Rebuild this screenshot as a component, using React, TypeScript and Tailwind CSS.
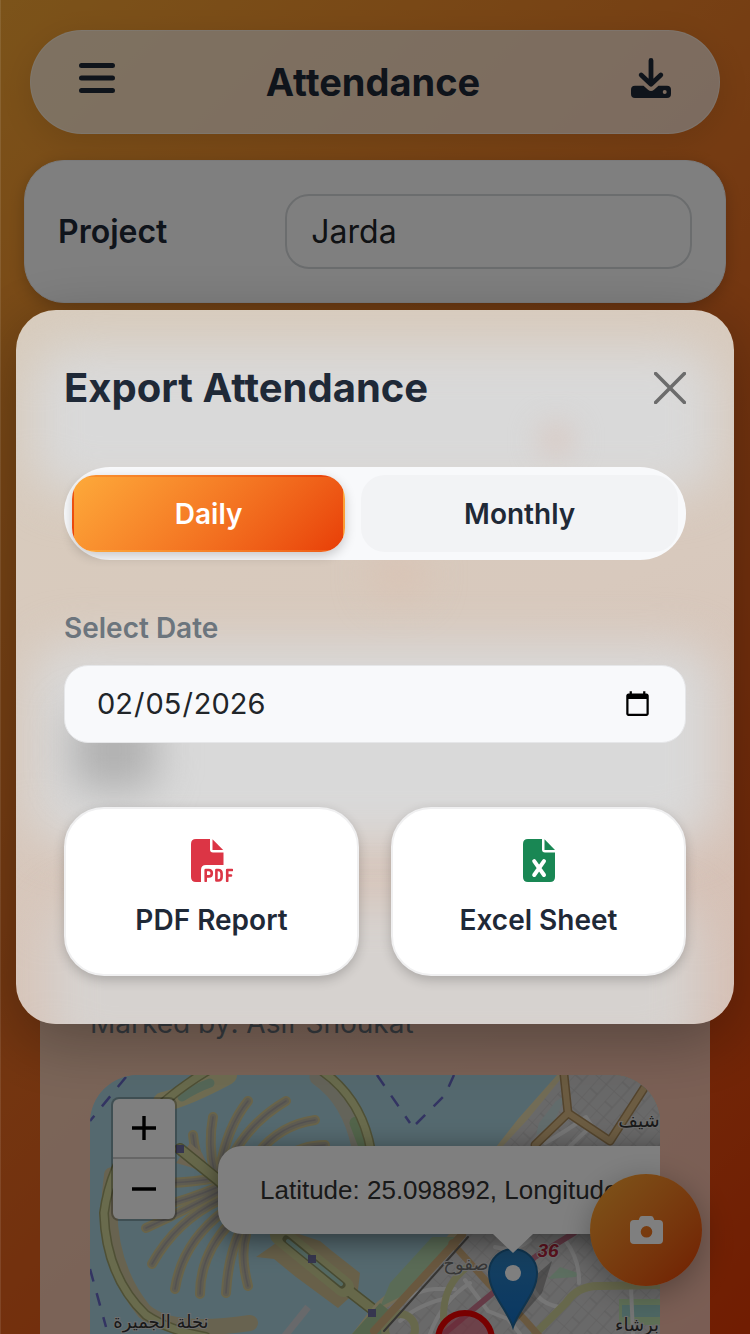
import { useState } from 'react';

const MODES = ['Daily', 'Monthly'];

// Palm fronds, tip first, each one ending at the trunk
const FRONDS = [
  'M158 26 Q137 52 130 94',
  'M196 26 Q162 46 144 78',
  'M225 45 Q190 50 168 78',
  'M235 70 Q212 70 192 84',
  'M123 42 Q118 68 124 96',
  'M103 60 Q105 80 112 92',
  'M78 108 Q105 107 126 103',
  'M62 134 Q100 124 128 112',
  'M56 153 Q98 134 128 117',
  'M62 189 Q86 146 130 125',
  'M85 214 Q92 168 134 136',
  'M110 219 Q110 180 140 148',
  'M136 218 Q138 182 150 156',
  'M158 211 Q150 180 156 160',
];

const MINOR_ROADS = [
  'M455 68 Q470 60 496 42 L504 54',
  'M497 55 L480 71',
  'M300 240 Q318 216 345 214 L365 214 M310 246 Q330 228 362 222',
  'M440 165 Q425 178 405 172',
  'M475 165 Q490 185 489 208',
  'M541 212 L543 259',
  'M375 205 L398 236 L418 244 L430 259',
  'M340 259 Q352 226 380 208',
  'M440 200 Q442 228 470 232',
];

function TrayDownIcon() {
  return (
    <svg viewBox="0 0 40 40" className="size-10" aria-hidden="true">
      <path
        d="M20 2.5V25.5 M10.2 17 20 26.2 29.8 17"
        fill="none"
        stroke="currentColor"
        strokeWidth="4.8"
        strokeLinecap="round"
        strokeLinejoin="round"
      />
      <path
        fill="currentColor"
        fillRule="evenodd"
        d="M4 27.8H12.5L17 31.8Q20 34.2 23 31.8L27.5 27.8H36Q40 27.8 40 31.8V36Q40 40 36 40H4Q0 40 0 36V31.8Q0 27.8 4 27.8ZM33.7 32A2 2 0 1 0 33.7 36A2 2 0 1 0 33.7 32Z"
      />
    </svg>
  );
}

function PdfIcon() {
  return (
    <svg viewBox="0 0 42 43" className="h-[43px] w-[42px] text-[#dc3545]" aria-hidden="true">
      <path fill="currentColor" d="M5 0H19V10.5Q19 13.5 22 13.5H32.5V26H15Q10 26 10 31V43H5Q0 43 0 38V5Q0 0 5 0Z" />
      <path fill="currentColor" d="M21.5.3 32.2 11H21.5Z" />
      <path
        d="M14.7 42V31H17.8Q20.8 31 20.8 34.2Q20.8 37.4 17.8 37.4H14.7 M25.4 31V41.5H27.2Q30.6 41.5 30.6 38V34.5Q30.6 31 27.2 31ZM36.2 42V31H41 M36.2 36.5H40"
        fill="none"
        stroke="currentColor"
        strokeWidth="2.6"
        strokeLinecap="round"
        strokeLinejoin="round"
      />
    </svg>
  );
}

function ExcelIcon() {
  return (
    <svg viewBox="0 0 32 43" className="h-[43px] w-8 text-[#198754]" aria-hidden="true">
      <path fill="currentColor" d="M5 0H19V10.5Q19 13.5 22 13.5H32V38Q32 43 27 43H5Q0 43 0 38V5Q0 0 5 0Z" />
      <path fill="currentColor" d="M21.5.3 32 11H21.5Z" />
      <path d="M11.2 22.2 21 36 M21 22.2 11.2 36" stroke="#fff" strokeWidth="4" strokeLinecap="round" />
    </svg>
  );
}

function MapCanvas() {
  return (
    <svg viewBox="0 0 571 259" preserveAspectRatio="xMinYMin slice" className="h-full w-full" aria-hidden="true">
      <defs>
        <pattern id="blocks" width="26" height="20" patternUnits="userSpaceOnUse" patternTransform="rotate(-48)">
          <rect width="26" height="20" fill="#d3d2d2" />
          <path d="M0 0H26 M0 10H26 M0 0V20 M13 0V10" stroke="#bfbebe" strokeWidth="1.2" />
        </pattern>
        <linearGradient id="pin" x1="0" y1="0" x2="0" y2="1">
          <stop offset="0" stopColor="#2e82c0" />
          <stop offset="1" stopColor="#126fc6" />
        </linearGradient>
      </defs>
      <rect width="571" height="259" fill="#aad3df" />

      {/* crescent */}
      <g fill="none" strokeLinecap="round">
        <path d="M73 27Q96 22 137 0" stroke="#dfd9a5" strokeWidth="20" />
        <path d="M92 22Q106 13 120 8" stroke="#abcfb0" strokeWidth="9" />
        <path d="M228 2Q260 24 270 72" stroke="#c9c8b4" strokeWidth="17" />
        <path d="M266 48L276 74" stroke="#a5c995" strokeWidth="13" />
        <path d="M22 100Q10 182 54 236Q80 260 160 248" stroke="#d0c7a0" strokeWidth="16" />
        <path d="M117 -4Q74 22 50 52Q20 92 14 138Q16 202 56 240Q80 256 116 262" stroke="#9ea06b" strokeWidth="10" />
        <path d="M117 -4Q74 22 50 52Q20 92 14 138Q16 202 56 240Q80 256 116 262" stroke="#d2d69a" strokeWidth="7" />
        <path d="M232 -4Q272 24 281 76" stroke="#9ea06b" strokeWidth="10" />
        <path d="M232 -4Q272 24 281 76" stroke="#d2d69a" strokeWidth="7" />
      </g>

      {/* palm */}
      <g fill="none" strokeLinecap="round">
        {FRONDS.map(d => (
          <path key={d} d={d} stroke="#d3c894" strokeWidth="10" />
        ))}
        {FRONDS.map(d => (
          <path key={d} d={d} stroke="#bdb8a4" strokeWidth="6" />
        ))}
        {FRONDS.map(d => (
          <path key={d} d={d} stroke="#a8a4a2" strokeWidth="1.6" />
        ))}
      </g>
      <path d="M100 68L112 78L122 100L100 92L86 88Z" fill="#d8c9a4" />
      <path d="M166 182L186 168L176 154L206 158L230 166L242 176L270 198L268 215L248 233L206 202L184 184Z" fill="#d0c193" />
      <g fill="none" strokeLinecap="round">
        <path d="M90 74L127 104L190 160L254 212L290 240" stroke="#959864" strokeWidth="12" />
        <path d="M90 74L127 104L190 160L254 212L290 240" stroke="#cdd095" strokeWidth="9" />
        <path d="M190 160L254 212" stroke="#cdd095" strokeWidth="20" />
        <path d="M196 164L252 210" stroke="#8f9565" strokeWidth="7" />
        <path d="M198 166L251 209" stroke="#a8d2c5" strokeWidth="4" />
      </g>

      {/* mainland */}
      <path d="M467 0L428 44L406 72L372 140L354 166L330 180L300 216L286 228L262 259H571V0Z" fill="#e5d9ac" />
      <path d="M474 0L438 44L412 72L380 150L340 184L312 222L292 236L268 259H571V0Z" fill="url(#blocks)" />
      <path d="M466 26L449 48L446 60L462 52L476 20Z" fill="#c4d8d8" />
      <path d="M342 162L370 162L318 218L290 232L300 208Z" fill="#b5d7ad" />
      <path d="M262 259L290 228L300 236L296 259Z" fill="#a9c998" />
      <path d="M398 196L408 190L410 200Z M458 204L470 192L488 198L486 202Z" fill="#b9dcc0" />
      <path d="M529 224H571V250H529Z" fill="#bedfad" />
      <path d="M532 230H571V242H532Z" fill="#9ccfc8" />
      <g fill="none" strokeLinecap="round" strokeLinejoin="round">
        {MINOR_ROADS.map(d => (
          <path key={d} d={d} stroke="#ececec" strokeWidth="4" />
        ))}
        <path d="M571 210L510 211Q488 210 476 228L445 259" stroke="#cfd199" strokeWidth="8" />
        <path d="M380 190Q350 210 354 250" stroke="#cfd199" strokeWidth="7" />
        <circle cx="310" cy="254" r="15" stroke="#cfd199" strokeWidth="8" />
        <path d="M445 70L478 38L474 0" stroke="#a8895a" strokeWidth="9" />
        <path d="M478 38L520 66L560 4" stroke="#a8895a" strokeWidth="9" />
        <path d="M445 70L478 38L474 0" stroke="#d8b985" strokeWidth="6" />
        <path d="M478 38L520 66L560 4" stroke="#d8b985" strokeWidth="6" />
        <path d="M362 168L398 208L435 245L450 262" stroke="#d3b07f" strokeWidth="7" />
        <path d="M372 160L284 256" stroke="#d3b07f" strokeWidth="8" />
        <path d="M378 162L294 256" stroke="#6c6a66" strokeWidth="2" />
        <path d="M484 158L445 182L398 222L350 262" stroke="#c9748c" strokeWidth="6" strokeDasharray="44 3" />
      </g>
      <path d="M194 262L218 232" stroke="#d0d3d6" strokeWidth="7" />

      {/* ferry lines */}
      <g fill="none" stroke="#6668c4" strokeWidth="2.5" strokeDasharray="13 12">
        <path d="M36 2L0 46" />
        <path d="M0 194L16 252" />
        <path d="M287 0L320 48" />
        <path d="M364 0L355 20L326 49" />
      </g>
      <path d="M86 70h8v8h-8z M218 180h8v8h-8z M278 234h8v8h-8z" fill="#6d6d9e" />

      <g fontFamily="'DejaVu Sans', sans-serif" fontSize="18" fill="#333" stroke="#dcdcdc" strokeWidth="2" paintOrder="stroke">
        <text x="71" y="253" textAnchor="middle">نخلة الجميرة</text>
        <text x="549" y="52" textAnchor="middle" fontSize="19">شيف</text>
        <text x="376" y="195" textAnchor="middle" fill="#6e6e6e">صفوح</text>
        <text x="547" y="256" textAnchor="middle">برشاء</text>
        <text x="458" y="182" textAnchor="middle" fontFamily="'Liberation Sans', sans-serif" fontSize="19" fontWeight="700" fontStyle="italic" fill="#b8263c">
          36
        </text>
      </g>

      <circle cx="375" cy="265" r="27" fill="#e0526c" fillOpacity=".6" stroke="#f00000" strokeWidth="6" />
      <path d="M424 250L446 200L462 186L452 218Z" fill="#000" opacity=".25" />
      <path
        fill="url(#pin)"
        stroke="#20689c"
        strokeWidth="2"
        d="M423 252C417 234 399 218 399 198A24 24 0 0 1 447 198C447 218 429 234 423 252Z"
      />
      <circle cx="423" cy="198" r="8" fill="#fff" />
    </svg>
  );
}

function AttendanceScreen() {
  return (
    <div className="flex h-screen flex-col overflow-hidden bg-linear-135 from-[#f8a734] via-[#e86d22] to-[#e23a04]">
      <header className="mx-[30px] mt-[30px] flex h-[104px] shrink-0 items-center justify-between rounded-[52px] border border-white/40 bg-white/70 px-12 pb-2 text-[#1f2937] shadow-[0_8px_32px_rgba(0,0,0,0.1)]">
        <button type="button" aria-label="Menu">
          <svg viewBox="0 0 36 30" className="h-[30px] w-9" aria-hidden="true">
            <path d="M2.5 2.5H33.5M2.5 15H33.5M2.5 27.5H33.5" stroke="currentColor" strokeWidth="5" strokeLinecap="round" />
          </svg>
        </button>
        <h1 className="pt-2 text-[38px] leading-12 font-bold">Attendance</h1>
        <button type="button" aria-label="Download">
          <TrayDownIcon />
        </button>
      </header>

      <section className="mx-6 mt-[26px] flex shrink-0 items-center gap-4 rounded-[40px] border border-[#f4f4f6] bg-white p-[33px] shadow-[0_4px_16px_rgba(0,0,0,0.2)]">
        <label htmlFor="project" className="w-1/3 text-[32px] leading-10 font-semibold text-[#1f2937]">
          Project
        </label>
        <select
          id="project"
          className="h-[75px] min-w-0 flex-1 appearance-none rounded-3xl border-2 border-[#d7dadd] bg-transparent px-6 text-[32px] text-[#212529]"
        >
          <option>Jarda</option>
        </select>
      </section>

      <section className="mx-10 mt-[586px] flex min-h-0 flex-1 flex-col bg-white/65 px-[50px] pt-[114px]">
        <p className="text-[28px] leading-10 text-[#6c757d]">Marked by: Asif Shoukat</p>
        <div className="relative mt-8 min-h-0 flex-1 overflow-hidden rounded-t-[48px] bg-[#aad3df]">
          <MapCanvas />
          <div className="absolute top-[22px] left-[21px] flex w-[66px] flex-col rounded-lg border-2 border-black/25 bg-white bg-clip-padding text-black">
            <button type="button" aria-label="Zoom in" className="flex h-15 items-center justify-center border-b-2 border-[#ccc]">
              <svg viewBox="0 0 24 24" className="size-6" aria-hidden="true">
                <path d="M0 12H24M12 0V24" stroke="currentColor" strokeWidth="3.4" />
              </svg>
            </button>
            <button type="button" aria-label="Zoom out" className="flex h-15 items-center justify-center">
              <svg viewBox="0 0 24 24" className="size-6" aria-hidden="true">
                <path d="M0 12H24" stroke="currentColor" strokeWidth="3.4" />
              </svg>
            </button>
          </div>
          <div className="absolute top-[71px] left-32 rounded-3xl bg-white px-[42px] py-6 font-['Liberation_Sans',Arial,sans-serif] text-[26px] leading-10 whitespace-nowrap text-[#333] shadow-[0_6px_28px_rgba(0,0,0,0.5)]">
            Latitude: 25.098892, Longitude: 55.152704
            <svg viewBox="0 0 40 20" className="absolute top-full left-[275px] h-5 w-10" aria-hidden="true">
              <path d="M0 0H40L20 19Z" fill="#fff" />
            </svg>
          </div>
        </div>
      </section>

      <button
        type="button"
        aria-label="Take photo"
        className="fixed right-12 bottom-12 flex size-28 items-center justify-center rounded-full bg-linear-135 from-[#fbab35] to-[#e23a00] text-white shadow-[0_8px_32px_rgba(0,0,0,0.3)]"
      >
        <svg viewBox="0 0 33 28" className="h-7 w-[33px]" aria-hidden="true">
          <path
            fill="currentColor"
            fillRule="evenodd"
            d="M12 0H21Q23 0 23.6 2L24.3 4H29Q33 4 33 8V24Q33 28 29 28H4Q0 28 0 24V8Q0 4 4 4H8.7L9.4 2Q10 0 12 0ZM16.5 10A5.8 5.8 0 1 0 16.5 21.6A5.8 5.8 0 1 0 16.5 10Z"
          />
        </svg>
      </button>
    </div>
  );
}

// Frosted panel: soft shapes of the cards that lie below the dialog
function FrostedBackdrop() {
  return (
    <div className="absolute inset-0 -z-10 overflow-hidden rounded-[40px] bg-linear-160 from-[#d8ccbd] via-[#d8c9bd] to-[#d6bfb4]" aria-hidden="true">
      <div className="absolute inset-x-4 top-9 h-[148px] rounded-[40px] bg-[#d9d9d9] blur-[24px]" />
      <div className="absolute top-28 right-40 size-9 rounded-full bg-[#d8cac4] blur-[14px]" />
      <div className="absolute top-60 left-1/2 size-12 rounded-full bg-[#d9c2b3] blur-[20px]" />
      <div className="absolute inset-x-4 top-[334px] h-[200px] rounded-[40px] bg-[#d9d9d9] blur-[24px]" />
      <div className="absolute top-[400px] left-14 h-20 w-[84px] rounded-2xl bg-[#b0b0b0] blur-[20px]" />
      <div className="absolute inset-x-8 top-[590px] -bottom-10 rounded-[40px] bg-[#d6d2cf] blur-[24px]" />
    </div>
  );
}

function ExportDialog() {
  const [mode, setMode] = useState('Daily');
  const [date, setDate] = useState('2026-02-05');

  return (
    <div
      role="dialog"
      aria-modal="true"
      aria-labelledby="export-title"
      className="relative isolate w-full rounded-[40px] p-12 text-[#1f2937] shadow-[0_16px_64px_rgba(0,0,0,0.3)]"
    >
      <FrostedBackdrop />
      <div className="flex h-15 items-center justify-between">
        <h2 id="export-title" className="text-[40px] leading-12 font-bold">
          Export Attendance
        </h2>
        <button type="button" aria-label="Close">
          <svg viewBox="0 0 32 32" className="size-8 text-[#6c6c6c]" aria-hidden="true">
            <path d="M1.6 1.6 30.4 30.4M30.4 1.6 1.6 30.4" stroke="currentColor" strokeWidth="3.6" strokeLinecap="round" />
          </svg>
        </button>
      </div>

      <div className="mt-[49px] flex gap-4 rounded-[46px] bg-[#f8f9fb] p-2">
        {MODES.map(m => (
          <button
            key={m}
            type="button"
            aria-pressed={mode === m}
            onClick={() => setMode(m)}
            className={`h-[77px] flex-auto rounded-3xl border-2 border-transparent text-[28px] font-semibold ${
              mode === m
                ? 'bg-linear-135 from-[#fda93a] to-[#e83e07] text-white shadow-[0_4px_12px_rgba(0,0,0,0.2)]'
                : 'bg-[#f2f3f5]'
            }`}
          >
            {m}
          </button>
        ))}
      </div>

      <label htmlFor="export-date" className="mt-12 block text-[28px] leading-10 font-semibold text-[#6c757d]">
        Select Date
      </label>
      <input
        id="export-date"
        type="date"
        value={date}
        onChange={e => setDate(e.target.value)}
        className="mt-[17px] block h-[78px] w-full rounded-3xl border border-[#e6e7e9] bg-[#f8f9fb] px-[31px] text-[29px] text-[#212529]"
      />

      <div className="mt-16 grid grid-cols-2 gap-8">
        <button
          type="button"
          className="flex h-[169px] flex-col items-center gap-4 rounded-[40px] border-2 border-[#f0f0f1] bg-white pt-[30px] text-[28px] leading-11 font-semibold shadow-[0_4px_12px_rgba(0,0,0,0.2)]"
        >
          <PdfIcon />
          PDF Report
        </button>
        <button
          type="button"
          className="flex h-[169px] flex-col items-center gap-4 rounded-[40px] border-2 border-[#f0f0f1] bg-white pt-[30px] text-[28px] leading-11 font-semibold shadow-[0_4px_12px_rgba(0,0,0,0.2)]"
        >
          <ExcelIcon />
          Excel Sheet
        </button>
      </div>
    </div>
  );
}

export default function App() {
  return (
    <div className="font-['Inter',sans-serif]">
      <AttendanceScreen />
      <div className="fixed inset-0 border-l border-white/10 bg-black/50" />
      <div className="fixed inset-0 flex items-center p-4">
        <ExportDialog />
      </div>
    </div>
  );
}
